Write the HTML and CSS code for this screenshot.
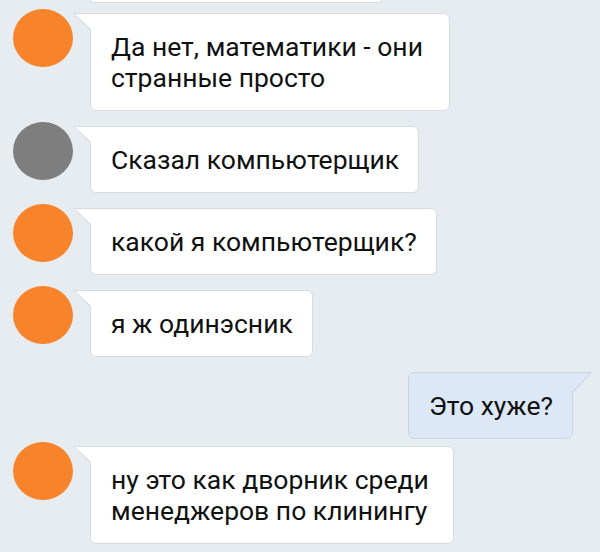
FILE: index.html
```html
<!DOCTYPE html>
<html lang="ru">
<head>
    <meta charset="UTF-8">
    <title>Диалог</title>
    <link rel="stylesheet" href="styles.css">
</head>
<body>
<div class="chat">
    <!-- хвост предыдущего сообщения, обрезан краем экрана -->
    <div class="stub"></div>

    <div class="msg first">
        <div class="avatar"></div>
        <div class="bubble wide">Да нет, математики - они странные просто</div>
    </div>

    <div class="msg">
        <div class="avatar gray"></div>
        <div class="bubble">Сказал компьютерщик</div>
    </div>

    <div class="msg">
        <div class="avatar"></div>
        <div class="bubble">какой я компьютерщик?</div>
    </div>

    <div class="msg">
        <div class="avatar"></div>
        <div class="bubble">я ж одинэсник</div>
    </div>

    <div class="msg out">
        <div class="bubble">Это хуже?</div>
    </div>

    <div class="msg after-out">
        <div class="avatar"></div>
        <div class="bubble wide">ну это как дворник среди менеджеров по клинингу</div>
    </div>
</div>
</body>
</html>
```

FILE: styles.css
```css
* {
    margin: 0;
    padding: 0;
    box-sizing: border-box;
}

body {
    background: #e7ecf1;
    font-family: Roboto, "Noto Sans", sans-serif;
    color: #111;
    overflow: hidden;
}

.chat {
    padding-left: 13px;
}

.stub {
    margin-left: 77px;
    width: 292px;
    height: 3px;
    background: #fff;
    border: 1px solid #d6dce3;
    border-top: none;
    border-radius: 0 0 6px 6px;
}

.msg {
    display: flex;
    align-items: flex-start;
    margin-top: 11px;
}

.msg.first {
    margin-top: 6px;
}

.avatar {
    width: 60px;
    height: 58px;
    border-radius: 50%;
    background: #f7832a;
    flex-shrink: 0;
}

.avatar.gray {
    background: #7e7e7e;
}

.bubble {
    position: relative;
    margin-left: 17px;
    margin-top: 4px;
    padding: 17px 19px 17px 20px;
    background: #fff;
    border: 1px solid #d6dce3;
    border-radius: 6px;
    border-top-left-radius: 0;
    font-size: 26.5px;
    line-height: 31px;
    white-space: nowrap;
}

.bubble.wide {
    width: 360px;
    white-space: normal;
}

.msg.after-out .bubble.wide {
    width: 364px;
}

/* уголок у входящего сообщения */
.bubble::before,
.bubble::after {
    content: "";
    position: absolute;
    top: -1px;
    left: -18px;
    width: 18px;
    height: 18px;
    background: #d6dce3;
    clip-path: polygon(0 0, 100% 0, 100% 100%);
}

.bubble::after {
    top: 0;
    left: -16px;
    width: 17px;
    height: 16px;
    background: #fff;
}

.msg.out {
    justify-content: flex-end;
    margin-top: 11px;
    margin-right: 27px;
}

.msg.out .bubble {
    margin-left: 0;
    background: #dce8f7;
    border-color: #c8d5e4;
    border-top-left-radius: 6px;
    border-top-right-radius: 0;
}

.msg.out .bubble::before {
    left: auto;
    right: -20px;
    width: 20px;
    height: 22px;
    background: #c8d5e4;
    clip-path: polygon(0 0, 100% 0, 0 100%);
}

.msg.out .bubble::after {
    left: auto;
    right: -18px;
    width: 19px;
    height: 20px;
    background: #dce8f7;
    clip-path: polygon(0 0, 100% 0, 0 100%);
}

.msg.after-out {
    margin-top: 3px;
}
```
